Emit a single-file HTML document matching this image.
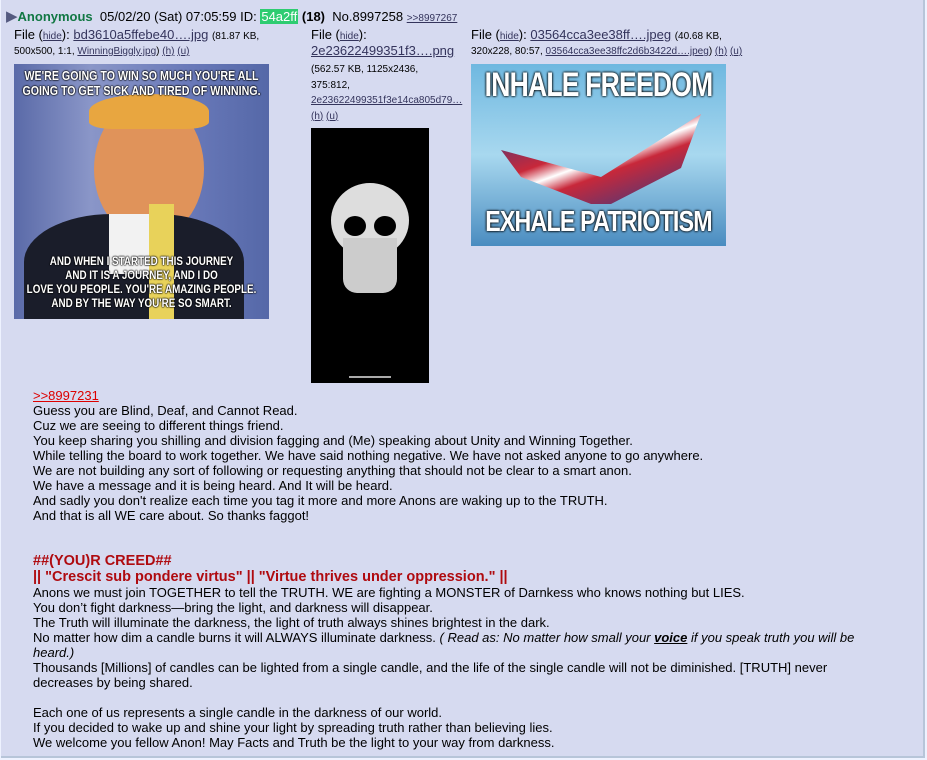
<!DOCTYPE html>
<html><head><meta charset="utf-8"><style>
body{margin:0;background:#eef2ff;width:927px;height:760px;overflow:hidden;font-family:"Liberation Sans",Arial,sans-serif;color:#000;}
.post{position:absolute;left:1px;top:0;width:922px;height:756px;background:#d6daf0;border-right:2px solid #b7c5d9;border-bottom:2px solid #b7c5d9;}
.a{position:absolute;white-space:nowrap;}
a{color:#34345c;}
.sm{font-size:10px;}
.f{font-size:13px;}
.txt{position:absolute;left:32px;font-size:13px;line-height:15px;white-space:nowrap;}
.red{color:#af0a0f;font-weight:bold;font-size:14.5px;line-height:16px;}
.cap{position:absolute;left:-20px;width:295px;text-align:center;color:#fff;font-weight:bold;transform:scaleX(0.82);text-shadow:0 0 2px #000,0 0 2px #000,0 0 1px #000;}
</style></head><body>
<div class="post">
<div class="a" style="left:5px;top:7px;font-size:13px;">
<span style="color:#555a80;font-size:15px;">&#9654;</span><b style="color:#117743;">Anonymous</b>&nbsp; 05/02/20 (Sat) 07:05:59 ID: <span style="background:#2ecc71;color:#fff;padding:0 1px;">54a2ff</span> <b>(18)</b>&nbsp; No.8997258 <a class="sm" href="#">&gt;&gt;8997267</a></div>

<div class="a f" style="left:13px;top:27px;">File (<a class="sm" href="#">hide</a>): <a href="#">bd3610a5ffebe40….jpg</a> <span class="sm">(81.87 KB,</span></div>
<div class="a sm" style="left:13px;top:46px;">500x500, 1:1, <a href="#">WinningBiggly.jpg</a>) <a href="#">(h)</a> <a href="#">(u)</a></div>

<div class="a f" style="left:310px;top:27px;">File (<a class="sm" href="#">hide</a>):</div>
<div class="a f" style="left:310px;top:43px;"><a href="#">2e23622499351f3….png</a></div>
<div class="a sm" style="left:310px;top:62px;line-height:15.5px;">(562.57 KB, 1125x2436,<br>375:812,<br><a href="#">2e23622499351f3e14ca805d79…</a><br><a href="#">(h)</a> <a href="#">(u)</a></div>

<div class="a f" style="left:470px;top:27px;">File (<a class="sm" href="#">hide</a>): <a href="#">03564cca3ee38ff….jpeg</a> <span class="sm">(40.68 KB,</span></div>
<div class="a sm" style="left:470px;top:46px;">320x228, 80:57, <a href="#">03564cca3ee38ffc2d6b3422d….jpeg</a>) <a href="#">(h)</a> <a href="#">(u)</a></div>

<!-- trump image -->
<div class="a" style="left:13px;top:64px;width:255px;height:255px;background:linear-gradient(90deg,#5a6aa8 0%,#8a96c8 30%,#6878b8 70%,#5568a8 100%);overflow:hidden;">
<div style="position:absolute;left:80px;top:35px;width:110px;height:140px;border-radius:50%;background:#e0935a;"></div>
<div style="position:absolute;left:75px;top:30px;width:120px;height:35px;border-radius:50% 50% 20% 20%;background:#e8a640;"></div>
<div style="position:absolute;left:10px;top:150px;width:220px;height:120px;border-radius:40% 40% 0 0;background:#1a1d2a;"></div>
<div style="position:absolute;left:95px;top:150px;width:45px;height:60px;background:#f2f2f2;"></div>
<div style="position:absolute;left:135px;top:140px;width:25px;height:115px;background:#e8d25a;"></div>
<div class="cap" style="top:4px;font-size:13px;line-height:15px;">WE'RE GOING TO WIN SO MUCH YOU'RE ALL<br>GOING TO GET SICK AND TIRED OF WINNING.</div>
<div class="cap" style="top:190px;font-size:12px;line-height:14px;">AND WHEN I STARTED THIS JOURNEY<br>AND IT IS A JOURNEY, AND I DO<br>LOVE YOU PEOPLE. YOU'RE AMAZING PEOPLE.<br>AND BY THE WAY YOU'RE SO SMART.</div>
</div>

<!-- skull image -->
<div class="a" style="left:310px;top:128px;width:118px;height:255px;background:#000;overflow:hidden;">
<div style="position:absolute;left:20px;top:55px;width:78px;height:75px;border-radius:50%;background:#ddd;"></div>
<div style="position:absolute;left:32px;top:110px;width:54px;height:55px;background:#ccc;border-radius:0 0 14px 14px;"></div>
<div style="position:absolute;left:33px;top:88px;width:22px;height:20px;border-radius:50%;background:#000;"></div>
<div style="position:absolute;left:63px;top:88px;width:22px;height:20px;border-radius:50%;background:#000;"></div>
<div style="position:absolute;left:38px;top:248px;width:42px;height:2px;background:#aaa;"></div>
</div>

<!-- eagle image -->
<div class="a" style="left:470px;top:64px;width:255px;height:182px;background:linear-gradient(180deg,#6fb8e0 0%,#a8d8ef 50%,#4a8cc0 100%);overflow:hidden;">
<div style="position:absolute;left:30px;top:50px;width:200px;height:90px;background:linear-gradient(160deg,#2a3c8a 0%,#c8283a 40%,#fff 50%,#c8283a 60%,#2a3c8a 100%);clip-path:polygon(0 40%,50% 70%,100% 0,90% 60%,55% 100%,45% 100%,10% 70%);"></div>
<div style="position:absolute;left:-20px;top:2px;width:295px;text-align:center;color:#fff;font:bold 34px 'Liberation Sans';letter-spacing:-1px;transform:scaleX(0.78);text-shadow:0 0 3px #000,0 0 3px #000;">INHALE FREEDOM</div>
<div style="position:absolute;left:-20px;top:142px;width:295px;text-align:center;color:#fff;font:bold 29px 'Liberation Sans';letter-spacing:-1px;transform:scaleX(0.8);text-shadow:0 0 3px #000,0 0 3px #000;">EXHALE PATRIOTISM</div>
</div>

<div class="txt" style="top:388px;"><a href="#" style="color:#d00;">&gt;&gt;8997231</a><br>Guess you are Blind, Deaf, and Cannot Read.<br>Cuz we are seeing to different things friend.<br>You keep sharing you shilling and division fagging and (Me) speaking about Unity and Winning Together.<br>While telling the board to work together. We have said nothing negative. We have not asked anyone to go anywhere.<br>We are not building any sort of following or requesting anything that should not be clear to a smart anon.<br>We have a message and it is being heard. And It will be heard.<br>And sadly you don't realize each time you tag it more and more Anons are waking up to the TRUTH.<br>And that is all WE care about. So thanks faggot!</div>

<div class="txt red" style="top:553px;">##(YOU)R CREED##<br>|| "Crescit sub pondere virtus" || "Virtue thrives under oppression." ||</div>
<div class="txt" style="top:585px;">Anons we must join TOGETHER to tell the TRUTH. WE are fighting a MONSTER of Darnkess who knows nothing but LIES.<br>You don’t fight darkness—bring the light, and darkness will disappear.<br>The Truth will illuminate the darkness, the light of truth always shines brightest in the dark.<br>No matter how dim a candle burns it will ALWAYS illuminate darkness. <i>( Read as: No matter how small your <b><u>voice</u></b> if you speak truth you will be</i><br><i>heard.)</i><br>Thousands [Millions] of candles can be lighted from a single candle, and the life of the single candle will not be diminished. [TRUTH] never<br>decreases by being shared.<br><br>Each one of us represents a single candle in the darkness of our world.<br>If you decided to wake up and shine your light by spreading truth rather than believing lies.<br>We welcome you fellow Anon! May Facts and Truth be the light to your way from darkness.</div>
</div>
</body></html>
